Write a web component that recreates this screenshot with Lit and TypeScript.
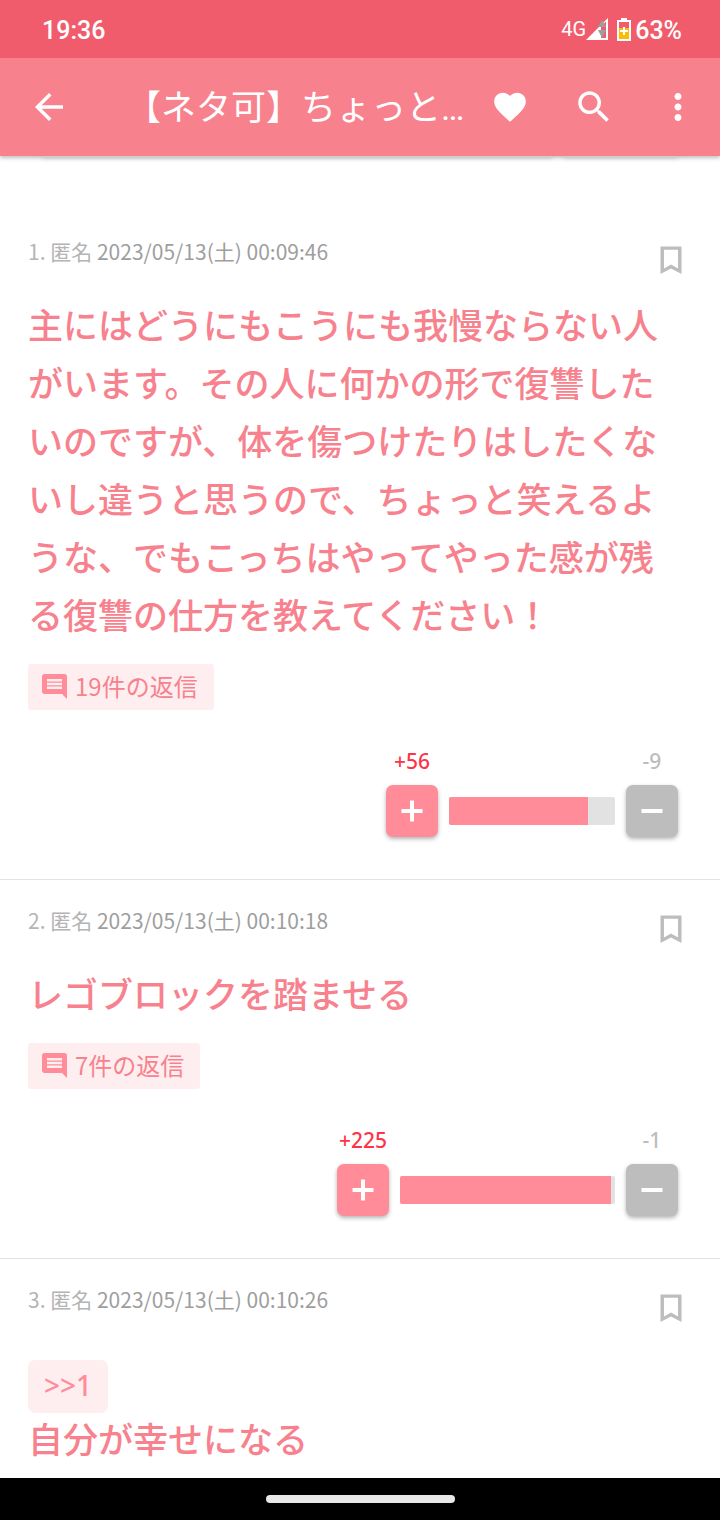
import { LitElement, html, css, svg, nothing } from "lit";
import { customElement, property } from "lit/decorators.js";

interface Votes {
  plus: number;
  minus: number;
  barWidth: number;
  share: number;
}

interface Post {
  no: number;
  author: string;
  date: string;
  body: string;
  anchor?: number;
  replies?: number;
  votes?: Votes;
}

const POSTS: Post[] = [
  {
    no: 1,
    author: "匿名",
    date: "2023/05/13(土) 00:09:46",
    body: "主にはどうにもこうにも我慢ならない人がいます。その人に何かの形で復讐したいのですが、体を傷つけたりはしたくないし違うと思うので、ちょっと笑えるような、でもこっちはやってやった感が残る復讐の仕方を教えてください！",
    replies: 19,
    votes: { plus: 56, minus: 9, barWidth: 166, share: 84 },
  },
  {
    no: 2,
    author: "匿名",
    date: "2023/05/13(土) 00:10:18",
    body: "レゴブロックを踏ませる",
    replies: 7,
    votes: { plus: 225, minus: 1, barWidth: 215, share: 98 },
  },
  {
    no: 3,
    author: "匿名",
    date: "2023/05/13(土) 00:10:26",
    body: "自分が幸せになる",
    anchor: 1,
  },
];

const icon = (size: number, content: unknown) => html`<svg
  width=${size}
  height=${size}
  viewBox="0 0 24 24"
  fill="currentColor"
  aria-hidden="true"
>${content}</svg>`;

const arrowBack = svg`<path d="M20 11H7.83l5.59-5.59L12 4l-8 8 8 8 1.41-1.41L7.83 13H20v-2z"/>`;
const heart = svg`<path d="M12 21.35l-1.45-1.32C5.4 15.36 2 12.28 2 8.5 2 5.42 4.42 3 7.5 3c1.74 0 3.41.81 4.5 2.09C13.09 3.81 14.76 3 16.5 3 19.58 3 22 5.42 22 8.5c0 3.78-3.4 6.86-8.55 11.54L12 21.35z"/>`;
const search = svg`<path d="M15.5 14h-.79l-.28-.27C15.41 12.59 16 11.11 16 9.5 16 5.91 13.09 3 9.5 3S3 5.91 3 9.5 5.91 16 9.5 16c1.61 0 3.09-.59 4.23-1.57l.27.28v.79l5 4.99L20.49 19l-4.99-5zm-6 0C7.01 14 5 11.99 5 9.5S7.01 5 9.5 5 14 7.01 14 9.5 11.99 14 9.5 14z"/>`;
const more = svg`<path d="M12 8c1.1 0 2-.9 2-2s-.9-2-2-2-2 .9-2 2 .9 2 2 2zm0 2c-1.1 0-2 .9-2 2s.9 2 2 2 2-.9 2-2-.9-2-2-2zm0 6c-1.1 0-2 .9-2 2s.9 2 2 2 2-.9 2-2-.9-2-2-2z"/>`;
const bookmark = svg`<path d="M5 3h14v18.300l-7-3.600-7 3.600V3zm2.300 2.200v12.400L12 15l4.700 2.600V5.200H7.300z" fill-rule="evenodd"/>`;
const comment = svg`<path d="M21.99 4c0-1.1-.89-2-1.99-2H4c-1.1 0-2 .9-2 2v12c0 1.1.9 2 2 2h14l4 4-.01-18zM18 14H6v-2h12v2zm0-3H6V9h12v2zm0-3H6V6h12v2z"/>`;
const plus = svg`<path d="M10.670 5h2.660v5.670H19v2.660h-5.670V19h-2.660v-5.670H5v-2.660h5.670z"/>`;
const minus = svg`<path d="M5 10.670h14v2.660H5z"/>`;

const controls = css`
  :host {
    box-sizing: border-box;
  }
  button {
    display: flex;
    align-items: center;
    justify-content: center;
    padding: 0;
    border: 0;
    background: none;
    color: inherit;
    font: inherit;
    cursor: pointer;
  }
  svg {
    display: block;
    flex: none;
  }
`;

@customElement("status-bar")
class StatusBar extends LitElement {
  static styles = css`
    :host {
      position: relative;
      z-index: 2;
      display: flex;
      align-items: center;
      box-sizing: border-box;
      height: 58px;
      padding: 4px 38px 0 42px;
      background: #f15c6c;
      color: #fff;
      font: 500 25px/28px Roboto, sans-serif;
    }
    .network {
      margin-left: auto;
      padding-bottom: 4px;
      font-size: 20px;
      font-weight: 400;
    }
    svg {
      display: block;
      margin-bottom: 4px;
    }
    .battery {
      margin-right: 4px;
      margin-left: 8px;
    }
  `;

  render() {
    return html`
      <span>19:36</span>
      <span class="network">4G</span>
      <svg width="23" height="24" viewBox="0 0 23 24" aria-hidden="true">
        <path d="M0 23L22 1v22z" fill="#fff" />
        <path d="M15 9.500L20 4.500V21h-5z" fill="#f15c6c" />
        <path d="M12 10l4-7 4 7zM12 13h8l-4 8z" fill="#9e9e9e" />
        <path d="M12 12h3" stroke="#fff" stroke-width="2" />
      </svg>
      <svg class="battery" width="14" height="24" viewBox="0 0 14 24" aria-hidden="true">
        <path d="M4 1h6v2h4v21H0V3h4z" fill="#fff" />
        <path d="M2 5h10v6H2z" fill="#f15c6c" />
        <path d="M2 11h10v11H2z" fill="#fbbc04" />
        <path d="M6 10h2v3h3v2H8v3H6v-3H3v-2h3z" fill="#fff" />
      </svg>
      <span>63%</span>
    `;
  }
}

@customElement("title-bar")
class TitleBar extends LitElement {
  static styles = [
    controls,
    css`
      :host {
        position: relative;
        z-index: 1;
        display: flex;
        align-items: center;
        height: 98px;
        padding-left: 7px;
        background: #f7828e;
        color: #fff;
        box-shadow: 0 2px 4px rgba(0, 0, 0, 0.25);
      }
      .title {
        flex: 1;
        min-width: 0;
        margin: 0;
        padding: 4px 0 0 35px;
        overflow: hidden;
        white-space: nowrap;
        font: 400 35px/52px Roboto, "Noto Sans CJK JP", sans-serif;
      }
      .action {
        flex: none;
        width: 84px;
        height: 84px;
      }
    `,
  ];

  render() {
    return html`
      <button class="action" aria-label="戻る">${icon(42, arrowBack)}</button>
      <h1 class="title">【ネタ可】ちょっと…</h1>
      <button class="action" aria-label="お気に入り">${icon(38, heart)}</button>
      <button class="action" aria-label="検索">${icon(42, search)}</button>
      <button class="action" aria-label="メニュー">${icon(42, more)}</button>
    `;
  }
}

@customElement("vote-meter")
class VoteMeter extends LitElement {
  @property({ attribute: false }) votes!: Votes;

  static styles = [
    controls,
    css`
      :host {
        display: flex;
        align-items: flex-end;
        justify-content: flex-end;
        gap: 11px;
      }
      .side {
        display: flex;
        flex-direction: column;
        align-items: center;
        gap: 13px;
        width: 52px;
        white-space: nowrap;
        font: 500 21px/22px "Noto Sans", sans-serif;
      }
      .up {
        color: #ff3347;
      }
      .down {
        color: #bdbdbd;
      }
      .vote {
        width: 52px;
        height: 52px;
        border-radius: 7px;
        color: #fff;
        box-shadow: 0 2px 4px rgba(0, 0, 0, 0.3);
      }
      .up .vote {
        background: #ff8c98;
      }
      .down .vote {
        background: #bdbdbd;
      }
      .bar {
        height: 28px;
        margin-bottom: 12px;
        overflow: hidden;
        border-radius: 2px;
        background: #e2e2e2;
      }
      .fill {
        height: 100%;
        background: #ff8c98;
      }
    `,
  ];

  render() {
    const v = this.votes;
    return html`
      <div class="side up">
        <span>+${v.plus}</span>
        <button class="vote" aria-label="プラス">${icon(36, plus)}</button>
      </div>
      <div class="bar" style="width:${v.barWidth}px">
        <div class="fill" style="width:${v.share}%"></div>
      </div>
      <div class="side down">
        <span>-${v.minus}</span>
        <button class="vote" aria-label="マイナス">${icon(36, minus)}</button>
      </div>
    `;
  }
}

@customElement("thread-post")
class ThreadPost extends LitElement {
  @property({ attribute: false }) post!: Post;

  static styles = [
    controls,
    css`
      :host {
        display: block;
        padding: 28px 42px 42px 28px;
        border-bottom: 1px solid #e2e2e2;
        font-family: "Noto Sans CJK JP", sans-serif;
      }
      .head {
        display: flex;
        align-items: flex-start;
        justify-content: space-between;
        margin: 0 -11px 14px 0;
      }
      .meta {
        color: #b4b4b4;
        font-size: 21px;
        line-height: 24px;
      }
      .date {
        color: #9e9e9e;
      }
      .save {
        width: 36px;
        height: 42px;
        color: #bdbdbd;
      }
      .body {
        margin: 0;
        color: #f7828e;
        font-size: 35px;
        font-weight: 500;
        line-height: 58px;
        line-break: anywhere;
      }
      .anchor {
        display: block;
        width: fit-content;
        margin: 31px 0 -4px;
        padding: 0 16px 3px;
        border-radius: 7px;
        background: #ffeef0;
        color: #ff8c98;
        font: 500 28px/50px "Noto Sans", sans-serif;
        text-decoration: none;
      }
      .replies {
        gap: 8px;
        height: 46px;
        margin-top: 21px;
        padding: 0 16px 0 14px;
        border-radius: 3px;
        background: #ffeef0;
        color: #f7828e;
        font-size: 24px;
      }
      .count {
        padding-bottom: 3px;
      }
      .replies svg {
        margin-bottom: 2px;
        color: #ff8c98;
      }
      .votes {
        margin-top: 40px;
      }
    `,
  ];

  render() {
    const p = this.post;
    return html`
      <header class="head">
        <div class="meta">
          ${p.no}. ${p.author}
          <time class="date">${p.date}</time>
        </div>
        <button class="save" aria-label="ブックマーク">${icon(36, bookmark)}</button>
      </header>
      ${p.anchor ? html`<a class="anchor" href="#${p.anchor}">&gt;&gt;${p.anchor}</a>` : nothing}
      <p class="body">${p.body}</p>
      ${p.replies
        ? html`<button class="replies">
            <svg width="25" height="25" viewBox="2 2 20 20" fill="currentColor" aria-hidden="true">${comment}</svg>
            <span class="count">${p.replies}件の返信</span>
          </button>`
        : nothing}
      ${p.votes ? html`<vote-meter class="votes" .votes=${p.votes}></vote-meter>` : nothing}
    `;
  }
}

@customElement("app-root")
class AppRoot extends LitElement {
  static styles = css`
    :host {
      display: flex;
      flex-direction: column;
      height: 100vh;
      overflow: hidden;
      background: #fff;
    }
    status-bar,
    title-bar {
      flex: none;
    }
    .thread {
      flex: 1;
      min-height: 0;
      overflow: hidden;
    }
    .form {
      display: flex;
      gap: 12px;
      padding: 0 42px 54px;
    }
    .field,
    .submit {
      height: 1px;
      box-shadow: 0 1px 4px rgba(0, 0, 0, 0.35);
    }
    .field {
      flex: 1;
    }
    .submit {
      width: 114px;
    }
    .system {
      display: flex;
      flex: none;
      align-items: center;
      justify-content: center;
      height: 42px;
      background: #000;
    }
    .handle {
      width: 189px;
      height: 8px;
      border-radius: 4px;
      background: #e8e8e8;
    }
  `;

  render() {
    return html`
      <status-bar></status-bar>
      <title-bar></title-bar>
      <main class="thread">
        <div class="form">
          <div class="field"></div>
          <div class="submit"></div>
        </div>
        ${POSTS.map((p) => html`<thread-post .post=${p}></thread-post>`)}
      </main>
      <div class="system"><div class="handle"></div></div>
    `;
  }
}
